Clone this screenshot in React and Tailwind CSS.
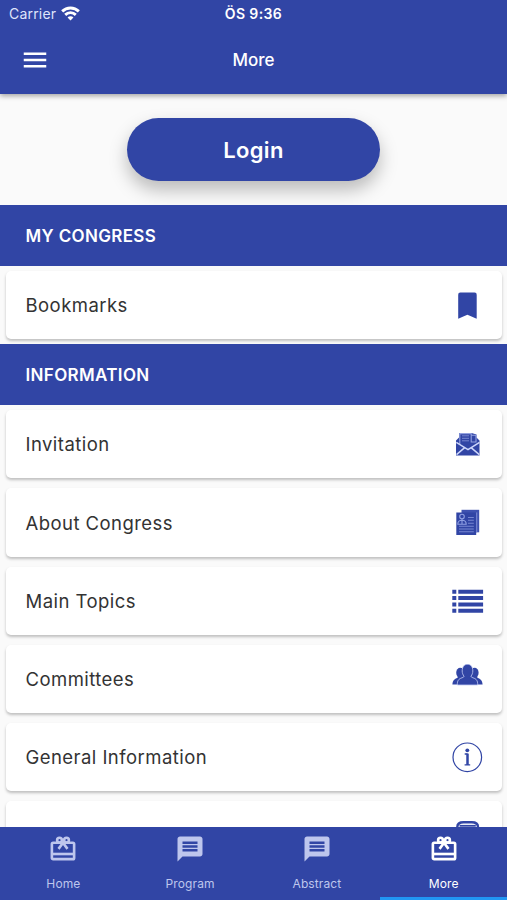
import React, { useState } from 'react';
import { MdMenu, MdMessage } from 'react-icons/md';

const WifiIcon = () => (
  <svg viewBox="0 0 18 14" className="h-[15px] w-[19px]" fill="none" stroke="currentColor" strokeWidth="2.7">
    <path d="M1.1 5a11.3 11.3 0 0 1 15.8 0" />
    <path d="M4 8.3a7.1 7.1 0 0 1 10 0" />
    <path d="M9 13.6 6.2 10.9a3.9 3.9 0 0 1 5.6 0z" fill="currentColor" stroke="none" />
  </svg>
);

const GiftIcon = ({ className }) => (
  <svg viewBox="0 0 24 24" className={className} fill="none" stroke="currentColor" strokeWidth="2.1">
    <rect x="3.1" y="7" width="17.8" height="13.1" rx="1" />
    <path d="M3 16h18" />
    <circle cx="9.2" cy="4.9" r="1.9" />
    <circle cx="14.8" cy="4.9" r="1.9" />
    <path d="m12.2 6.8-3.8 5.1M11.8 6.8l3.8 5.1" />
  </svg>
);

const BookmarkIcon = () => (
  <svg viewBox="0 0 32 32" className="h-8 w-8" fill="currentColor">
    <path d="M8.5 2.5h13.9a2.2 2.2 0 0 1 2.3 2.3v23.9c-3.2-1.2-6-2.8-9.3-4-3.3 1.2-6 2.8-9.2 4V4.8a2.2 2.2 0 0 1 2.3-2.3z" />
  </svg>
);

const InvitationIcon = () => (
  <svg viewBox="0 0 32 32" className="h-8 w-8">
    <path d="M4 11.5 7 8.5V4h12.5l5 1.5v3l3 3V26.5H4z" fill="#3145a5" />
    <path d="M7.8 15V4.6h11.4v8.4h4.8V6.3h-4.8" fill="none" stroke="#93a1e0" strokeWidth="1.1" />
    <path d="M10 6.8h7M10 9.3h7M10 11.8h7" stroke="#7887d0" strokeWidth="1" />
    <path d="M4.3 13.3 16 20.6l11.5-7.3M4.5 25.6l8.2-7M27.3 25.6l-8.2-7" fill="none" stroke="#cdd6fb" strokeWidth="1.5" />
  </svg>
);

const AboutIcon = () => (
  <svg viewBox="0 0 32 32" className="h-8 w-8">
    <path d="M9.5 2.8h17.7v22.5H9.5z" fill="#3f52b0" />
    <path d="M24.7 5.5v20" fill="none" stroke="#8f9de1" />
    <path d="M4.3 5.5h19.9v22.5H4.3z" fill="#3145a5" />
    <g fill="none" stroke="#8f9fe2" strokeWidth="1.1">
      <circle cx="10" cy="9.6" r="2.3" />
      <path d="M5.8 17.2c0-3 1.5-4 4.2-4s4.2 1 4.2 4zM10 12v5" />
      <path d="M16 10.5h5.8M16 13.3h5.8M16 16.2h5.8M7 19.3h14.8M7 22h14.8M7 24.8h14.8" stroke="#7787d2" />
    </g>
  </svg>
);

const TopicsIcon = () => (
  <svg viewBox="0 0 32 32" className="h-8 w-8" fill="currentColor">
    <path d="M.3 3.8h4v4h-4zM.3 10.1h4v4h-4zM.3 16.5h4v4h-4zM.3 22.8h4v4h-4z" />
    <path d="M6.3 3.8h24.8v4H6.3zM6.3 10.1h24.8v4H6.3zM6.3 16.5h24.8v4H6.3zM6.3 22.8h24.8v4H6.3z" />
  </svg>
);

const CommitteesIcon = () => (
  <svg viewBox="0 0 32 32" className="h-8 w-8">
    <g fill="#3145a5">
      <ellipse cx="8.2" cy="8.8" rx="4" ry="5" />
      <ellipse cx="22.6" cy="8.8" rx="4" ry="5" />
      <path d="M.4 20.5c.4-4.4 1.8-5.2 5.2-6.8L6 11h6.5v9.5zM30.6 20.5c-.4-4.4-1.8-5.2-5.2-6.8L25 11h-6.5v9.5z" />
    </g>
    <path
      d="M5.3 21c0-4.6 1.2-6 4.7-7.2 1.6-.5 2.2-1 1.9-1.8-1-1.2-1.7-3-1.7-5 0-4.2 2-6.7 5.3-6.7s5.3 2.5 5.3 6.7c0 2-.7 3.8-1.7 5-.3.8.3 1.3 1.9 1.8 3.5 1.2 4.7 2.6 4.7 7.2z"
      fill="#3145a5"
      stroke="#c3ccf4"
      strokeWidth=".8"
    />
  </svg>
);

const InfoIcon = () => (
  <svg viewBox="0 0 32 32" className="h-8 w-8" fill="none" stroke="currentColor">
    <circle cx="15.3" cy="15.3" r="14.3" strokeWidth="1.2" />
    <circle cx="15.3" cy="8.3" r="1.9" fill="currentColor" stroke="none" />
    <path d="M12.7 12h3M12.6 22.8h5.6" strokeWidth="1.3" />
    <path d="M15.5 11.6V23" strokeWidth="2.5" />
  </svg>
);

const ClipboardIcon = () => (
  <svg viewBox="0 0 32 32" className="h-8 w-8" fill="none" stroke="currentColor" strokeWidth="2.4">
    <path d="M5.3 30V7.2C5.3 3.3 8.5 2.3 11.5 2.3h8.3c3 0 6.2 1 6.2 4.9V30z" />
    <path d="M7.5 5.8h16.3" strokeWidth="1.8" />
    <path d="M10 12h11M10 17h11M10 22h11" />
  </svg>
);

const sections = [
  {
    title: 'MY CONGRESS',
    items: [{ label: 'Bookmarks', icon: BookmarkIcon }],
  },
  {
    title: 'INFORMATION',
    items: [
      { label: 'Invitation', icon: InvitationIcon },
      { label: 'About Congress', icon: AboutIcon },
      { label: 'Main Topics', icon: TopicsIcon },
      { label: 'Committees', icon: CommitteesIcon },
      { label: 'General Information', icon: InfoIcon },
      { label: '', icon: ClipboardIcon },
    ],
  },
];

const tabs = [
  { label: 'Home', icon: GiftIcon },
  { label: 'Program', icon: MdMessage },
  { label: 'Abstract', icon: MdMessage },
  { label: 'More', icon: GiftIcon },
];

const App = () => {
  const [activeTab, setActiveTab] = useState('More');

  return (
    <div className="flex h-[900px] w-full flex-col overflow-hidden bg-[#fafafa] font-['Inter',sans-serif] text-[#333333]">
      {/* Header */}
      <header className="relative z-10 h-[94px] shrink-0 bg-[#3145a5] text-white shadow-[0_2px_5px_rgba(0,0,0,0.35)]">
        <div className="grid h-7 grid-cols-3 items-center px-[9px]">
          <div className="flex items-center gap-[5px] pb-px text-[14px] text-[#dfe4fb]">
            <span className="tracking-[0.2px]">Carrier</span>
            <span className="pb-px text-white"><WifiIcon /></span>
          </div>
          <span className="pb-px text-center text-[14px] font-semibold tracking-[0.4px]">ÖS 9:36</span>
        </div>
        <div className="grid h-[64px] grid-cols-3 items-center px-5">
          <button aria-label="Menu" className="justify-self-start">
            <MdMenu className="h-[30px] w-[30px]" />
          </button>
          <h1 className="pt-px text-center text-[17px] font-medium">More</h1>
        </div>
      </header>

      <main className="min-h-0 flex-1 overflow-hidden">
        <div className="flex h-[111px] justify-center pt-6">
          <button className="h-[63px] w-[253px] rounded-full bg-[#3145a5] pt-px text-[22px] font-semibold tracking-[0.3px] text-white shadow-[0_9px_18px_rgba(0,0,0,0.26)]">
            Login
          </button>
        </div>

        {/* Menu sections */}
        {sections.map((section) => (
          <section key={section.title} className="relative">
            <h2 className="flex h-[61px] items-center bg-[#3145a5] px-[25.5px] pt-[2px] text-[17px] font-semibold tracking-[0.35px] text-white">
              {section.title}
            </h2>
            {section.items.map(({ label, icon: Icon }) => (
              <div key={label} className="h-[78.2px] py-[5px] pr-[5px] pl-[6px]">
                <button className="flex h-full w-full items-center justify-between rounded-[5px] bg-white pt-[2px] pr-[18.5px] pl-[19.5px] text-[18.5px] tracking-[0.45px] shadow-[0_2px_3px_rgba(0,0,0,0.24)]">
                  <span>{label}</span>
                  <span className="text-[#3145a5]"><Icon /></span>
                </button>
              </div>
            ))}
          </section>
        ))}
      </main>

      {/* Bottom tabs */}
      <nav className="relative grid h-[73px] shrink-0 grid-cols-4 bg-[#3145a5]">
        {tabs.map(({ label, icon: Icon }) => (
          <button
            key={label}
            onClick={() => setActiveTab(label)}
            className={`flex flex-col items-center border-b-[3px] pt-[7px] text-[12px] ${
              activeTab === label ? 'border-[#2196f3] text-white' : 'border-transparent text-[#bec6ed]'
            }`}
          >
            <Icon className="h-[30px] w-[30px]" />
            <span className="mt-[11px] tracking-[0.1px]">{label}</span>
          </button>
        ))}
      </nav>
    </div>
  );
};

export default App;
